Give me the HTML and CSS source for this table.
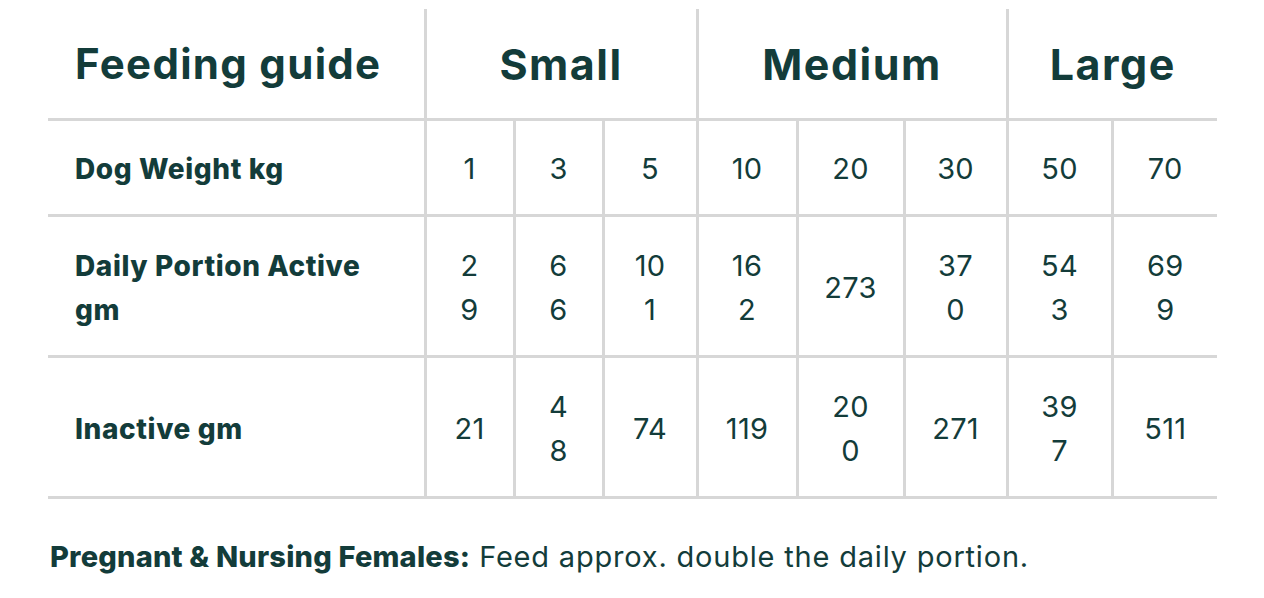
FILE: index.html
```html
<!DOCTYPE html>
<html lang="en">
<head>
<meta charset="utf-8">
<title>Feeding guide</title>
<link rel="stylesheet" href="styles.css">
</head>
<body>
<div class="guide">
  <table class="feed-table">
    <colgroup>
      <col class="c-label">
      <col class="c1"><col class="c2"><col class="c3">
      <col class="c4"><col class="c5"><col class="c6">
      <col class="c7"><col class="c8">
    </colgroup>
    <thead>
      <tr class="head-row">
        <th class="title">Feeding guide</th>
        <th colspan="3" class="group">Small</th>
        <th colspan="3" class="group">Medium</th>
        <th colspan="2" class="group">Large</th>
      </tr>
    </thead>
    <tbody>
      <tr class="row-single">
        <th class="label">Dog Weight kg</th>
        <td>1</td><td>3</td><td>5</td><td>10</td><td>20</td><td>30</td><td>50</td><td>70</td>
      </tr>
      <tr class="row-double">
        <th class="label">Daily Portion Active gm</th>
        <td>2<br>9</td><td>6<br>6</td><td>10<br>1</td><td>16<br>2</td><td>273</td><td>37<br>0</td><td>54<br>3</td><td>69<br>9</td>
      </tr>
      <tr class="row-double">
        <th class="label">Inactive gm</th>
        <td>21</td><td>4<br>8</td><td>74</td><td>119</td><td>20<br>0</td><td>271</td><td>39<br>7</td><td>511</td>
      </tr>
    </tbody>
  </table>
  <p class="note"><strong>Pregnant &amp; Nursing Females:</strong> Feed approx. double the daily portion.</p>
</div>
</body>
</html>
```

FILE: styles.css
```css
html, body {
  margin: 0;
  padding: 0;
  background: #ffffff;
}

body {
  font-family: Inter, "Open Sans", "Liberation Sans", sans-serif;
  color: #133c3a;
}

.guide {
  padding: 9px 0 0 48px;
  width: 1169px;
}

.feed-table {
  width: 1169px;
  border-collapse: collapse;
  table-layout: fixed;
}

.c-label { width: 377px; }
.c1 { width: 89px; }
.c2 { width: 89px; }
.c3 { width: 94px; }
.c4 { width: 100px; }
.c5 { width: 107px; }
.c6 { width: 103px; }
.c7 { width: 105px; }
.c8 { width: 105px; }

.feed-table th,
.feed-table td {
  padding: 0;
  border-bottom: 3px solid #d7d7d7;
  border-left: 3px solid #d7d7d7;
  vertical-align: middle;
  text-align: center;
}

.feed-table tbody th,
.feed-table tbody td {
  padding-top: 3px;
}

.feed-table .title,
.feed-table .label {
  border-left: none;
  text-align: left;
  padding-left: 27px;
  padding-right: 40px;
}

.head-row th { height: 109px; }
.row-single td, .row-single th { height: 90px; }
.row-double td, .row-double th { height: 135px; }

.title {
  font-size: 42px;
  font-weight: 700;
  letter-spacing: 1.3px;
}

.group {
  font-size: 43px;
  font-weight: 700;
  letter-spacing: 1.5px;
}

.label {
  font-size: 28px;
  font-weight: 800;
  line-height: 44px;
  letter-spacing: 0.6px;
}

.feed-table td {
  font-size: 29px;
  font-weight: 400;
  line-height: 44px;
  letter-spacing: 0.3px;
}

.note {
  margin: 38px 0 0 2px;
  font-size: 29px;
  line-height: 40px;
  letter-spacing: 0.8px;
}

.note strong {
  font-weight: 800;
  letter-spacing: 0.2px;
}
```
